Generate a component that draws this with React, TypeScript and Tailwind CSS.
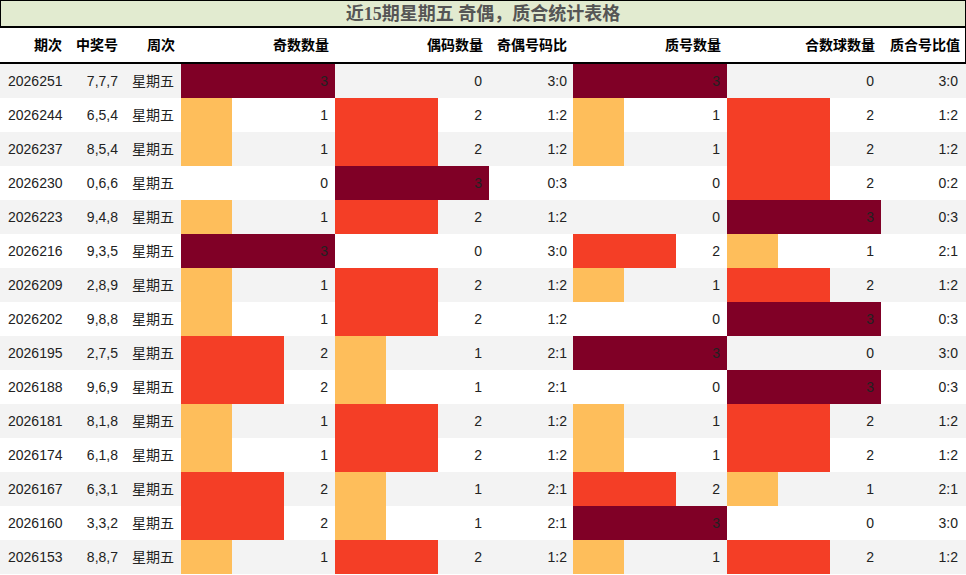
type Row = {
  issue: string;
  nums: string;
  odd: number;
  even: number;
  prime: number;
  comp: number;
};

const rows: Row[] = [
  { issue: "2026251", nums: "7,7,7", odd: 3, even: 0, prime: 3, comp: 0 },
  { issue: "2026244", nums: "6,5,4", odd: 1, even: 2, prime: 1, comp: 2 },
  { issue: "2026237", nums: "8,5,4", odd: 1, even: 2, prime: 1, comp: 2 },
  { issue: "2026230", nums: "0,6,6", odd: 0, even: 3, prime: 0, comp: 2 },
  { issue: "2026223", nums: "9,4,8", odd: 1, even: 2, prime: 0, comp: 3 },
  { issue: "2026216", nums: "9,3,5", odd: 3, even: 0, prime: 2, comp: 1 },
  { issue: "2026209", nums: "2,8,9", odd: 1, even: 2, prime: 1, comp: 2 },
  { issue: "2026202", nums: "9,8,8", odd: 1, even: 2, prime: 0, comp: 3 },
  { issue: "2026195", nums: "2,7,5", odd: 2, even: 1, prime: 3, comp: 0 },
  { issue: "2026188", nums: "9,6,9", odd: 2, even: 1, prime: 0, comp: 3 },
  { issue: "2026181", nums: "8,1,8", odd: 1, even: 2, prime: 1, comp: 2 },
  { issue: "2026174", nums: "6,1,8", odd: 1, even: 2, prime: 1, comp: 2 },
  { issue: "2026167", nums: "6,3,1", odd: 2, even: 1, prime: 2, comp: 1 },
  { issue: "2026160", nums: "3,3,2", odd: 2, even: 1, prime: 3, comp: 0 },
  { issue: "2026153", nums: "8,8,7", odd: 1, even: 2, prime: 1, comp: 2 },
];

const cols = "grid grid-cols-[68px_56px_57px_154px_154px_84px_154px_154px_85px]";

const barColor: Record<number, string> = {
  0: "bg-transparent",
  1: "bg-[#febe5b]",
  2: "bg-[#f43e26]",
  3: "bg-[#800026]",
};

function BarCell({ value }: { value: number }) {
  return (
    <div className="relative flex items-center justify-end pr-[7px]">
      <div
        className={`absolute left-0 top-0 bottom-0 ${barColor[value]}`}
        style={{ width: `${(value / 3) * 154}px` }}
      />
      <span className="relative">{value}</span>
    </div>
  );
}

const headers = ["期次", "中奖号", "周次", "奇数数量", "偶码数量", "奇偶号码比", "质号数量", "合数球数量", "质合号比值"];

export default function App() {
  return (
    <div className="w-[966px] h-[575px] bg-white overflow-hidden text-[#222] font-['Liberation_Sans','Noto_Sans_CJK_SC',sans-serif]">
      <div className="h-[28px] border border-b-2 border-black bg-[#e2ebd0] flex items-center justify-center">
        <h1 className="text-[18px] font-bold text-[#555] font-['Liberation_Serif','Noto_Sans_CJK_SC',serif] leading-none">
          近15期星期五 奇偶，质合统计表格
        </h1>
      </div>
      <div className={`${cols} h-[36px] border-b-2 border-r border-black text-[14px] font-bold text-black`}>
        {headers.map((h) => (
          <div key={h} className="flex items-center justify-end pr-[6px]">
            {h}
          </div>
        ))}
      </div>
      {rows.map((r, i) => (
        <div
          key={r.issue}
          className={`${cols} h-[34px] text-[14px] ${i % 2 === 0 ? "bg-[#f3f3f3]" : "bg-white"}`}
        >
          <div className="flex items-center pl-[8px]">{r.issue}</div>
          <div className="flex items-center justify-end pr-[6px]">{r.nums}</div>
          <div className="flex items-center justify-end pr-[7px]">星期五</div>
          <BarCell value={r.odd} />
          <BarCell value={r.even} />
          <div className="flex items-center justify-end pr-[6px]">
            {r.odd}:{r.even}
          </div>
          <BarCell value={r.prime} />
          <BarCell value={r.comp} />
          <div className="flex items-center justify-end pr-[8px]">
            {r.prime}:{r.comp}
          </div>
        </div>
      ))}
    </div>
  );
}
